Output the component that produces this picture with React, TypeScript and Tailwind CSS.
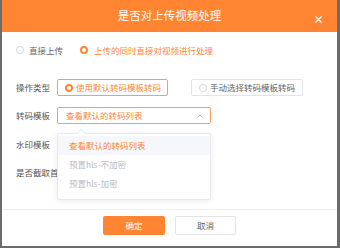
const FONT = "font-['Noto_Sans_CJK_SC','Noto_Sans',sans-serif]";

const Radio = ({ checked }: { checked: boolean }) =>
  checked ? (
    <span className="box-border block h-[8px] w-[8px] shrink-0 rounded-full border-[2.5px] border-[#ff8533] bg-white" />
  ) : (
    <span className="box-border block h-[8px] w-[8px] shrink-0 rounded-full border border-[#d4d7dd] bg-white" />
  );

const Label = ({ children }: { children: string }) => (
  <div className="w-[41px] shrink-0 whitespace-nowrap text-[8.5px] leading-none text-[#555]">{children}</div>
);

const App = () => {
  return (
    <div className={`${FONT} h-[248px] w-[340px] bg-[#6b6b6b] pl-[2px] pr-[3px] pb-[2px]`}>
      <div className="relative flex h-[246px] flex-col bg-white">
        <div className="relative flex h-[32px] shrink-0 items-center justify-center bg-[#ff8533]">
          <span className="text-[11.5px] leading-none text-white">是否对上传视频处理</span>
          <svg className="absolute right-[15px] top-[16px]" width="7" height="7" viewBox="0 0 7 7">
            <path d="M0.5 0.5 L6.5 6.5 M6.5 0.5 L0.5 6.5" stroke="#fff" strokeWidth="1.3" />
          </svg>
        </div>

        <div className="flex-1 pl-[14px] pt-[9px]">
          <div className="flex h-[18px] items-center text-[8.5px] leading-none">
            <Radio checked={false} />
            <span className="ml-[5px] text-[#606266]">直接上传</span>
            <span className="ml-[17px]"><Radio checked /></span>
            <span className="ml-[6px] text-[#ff8533]">上传的同时直接对视频进行处理</span>
          </div>

          <div className="mt-[20px] flex h-[17px] items-center">
            <Label>操作类型</Label>
            <div className="flex h-[17px] w-[111px] items-center rounded-[2px] border border-[#ff9c5c] pl-[7px] text-[8.5px] leading-none text-[#ff8533]">
              <Radio checked />
              <span className="ml-[3px] whitespace-nowrap">使用默认转码模板转码</span>
            </div>
            <div className="ml-[23px] flex h-[17px] w-[112px] items-center rounded-[2px] border border-[#e2e4e8] pl-[7px] text-[8.5px] leading-none text-[#606266]">
              <Radio checked={false} />
              <span className="ml-[3px] whitespace-nowrap">手动选择转码模板转码</span>
            </div>
          </div>

          <div className="mt-[11px] flex h-[17px] items-center">
            <Label>转码模板</Label>
            <div className="relative">
              <div className="flex h-[17px] w-[154px] items-center justify-between rounded-[2px] border border-[#ff9c5c] pl-[8px] pr-[7px] text-[8.5px] leading-none text-[#ff8533]">
                <span>查看默认的转码列表</span>
                <svg width="6" height="4" viewBox="0 0 6 4">
                  <path d="M0.5 3.5 L3 1 L5.5 3.5" stroke="#b0b3b8" strokeWidth="0.9" fill="none" />
                </svg>
              </div>
              <div className="absolute left-0 top-[26px] z-10 w-[154px] rounded-[2px] border border-[#e8eaee] bg-white pb-[6px] pt-[2px] shadow-[0_1px_6px_rgba(0,0,0,0.08)]">
                <div className="absolute left-[20px] top-[-4px] h-[6px] w-[6px] rotate-45 border-l border-t border-[#e8eaee] bg-white" />
                <div className="flex h-[19px] items-center bg-[#f5f7fa] pl-[11px] text-[8.5px] leading-none text-[#ff8533]">查看默认的转码列表</div>
                <div className="flex h-[19px] items-center pl-[11px] text-[8.5px] leading-none text-[#b8bcc2]">预置hls-不加密</div>
                <div className="flex h-[19px] items-center pl-[11px] text-[8.5px] leading-none text-[#b8bcc2]">预置hls-加密</div>
              </div>
            </div>
          </div>

          <div className="mt-[12px] flex h-[17px] items-center">
            <Label>水印模板</Label>
          </div>

          <div className="mt-[11px] flex h-[17px] items-center">
            <Label>是否截取首帧</Label>
          </div>
        </div>

        <div className="flex h-[37px] shrink-0 justify-center gap-[10px] border-t border-[#eceef1] pt-[6px]">
          <button className="h-[19px] w-[62px] rounded-[2px] bg-[#ff8533] text-[8.5px] leading-none text-white">确定</button>
          <button className="h-[19px] w-[61px] rounded-[2px] border border-[#e2e4e8] bg-white text-[8.5px] leading-none text-[#606266]">取消</button>
        </div>
      </div>
    </div>
  );
};

export default App;
